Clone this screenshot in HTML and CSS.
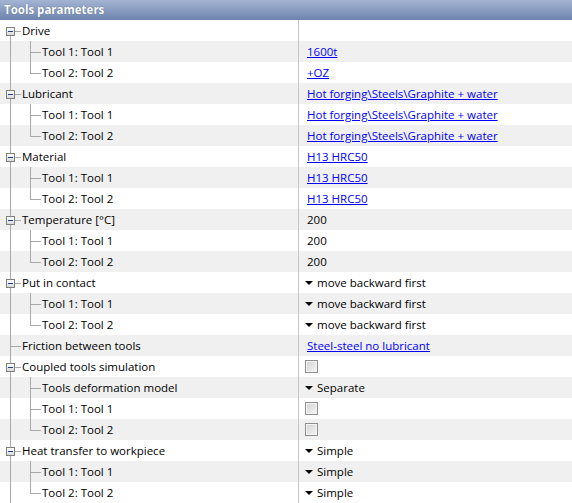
FILE: index.html
```html
<!DOCTYPE html>
<html>
<head>
<meta charset="utf-8">
<link rel="stylesheet" href="styles.css">
</head>
<body>
<div class="panel">
  <div class="header">Tools parameters</div>
  <div class="rows">
    <div class="row"><div class="name"><span class="g g-parent first"><span class="box"></span></span><span class="label">Drive</span></div><div class="value"></div></div>
    <div class="row alt"><div class="name"><span class="g g-child"></span><span class="label">Tool 1: Tool 1</span></div><div class="value"><a class="link">1600t</a></div></div>
    <div class="row"><div class="name"><span class="g g-child last"></span><span class="label">Tool 2: Tool 2</span></div><div class="value"><a class="link">+OZ</a></div></div>

    <div class="row alt"><div class="name"><span class="g g-parent"><span class="box"></span></span><span class="label">Lubricant</span></div><div class="value"><a class="link">Hot forging\Steels\Graphite + water</a></div></div>
    <div class="row"><div class="name"><span class="g g-child"></span><span class="label">Tool 1: Tool 1</span></div><div class="value"><a class="link">Hot forging\Steels\Graphite + water</a></div></div>
    <div class="row alt"><div class="name"><span class="g g-child last"></span><span class="label">Tool 2: Tool 2</span></div><div class="value"><a class="link">Hot forging\Steels\Graphite + water</a></div></div>

    <div class="row"><div class="name"><span class="g g-parent"><span class="box"></span></span><span class="label">Material</span></div><div class="value"><a class="link">H13 HRC50</a></div></div>
    <div class="row alt"><div class="name"><span class="g g-child"></span><span class="label">Tool 1: Tool 1</span></div><div class="value"><a class="link">H13 HRC50</a></div></div>
    <div class="row"><div class="name"><span class="g g-child last"></span><span class="label">Tool 2: Tool 2</span></div><div class="value"><a class="link">H13 HRC50</a></div></div>

    <div class="row alt"><div class="name"><span class="g g-parent"><span class="box"></span></span><span class="label">Temperature [°C]</span></div><div class="value">200</div></div>
    <div class="row"><div class="name"><span class="g g-child"></span><span class="label">Tool 1: Tool 1</span></div><div class="value">200</div></div>
    <div class="row alt"><div class="name"><span class="g g-child last"></span><span class="label">Tool 2: Tool 2</span></div><div class="value">200</div></div>

    <div class="row"><div class="name"><span class="g g-parent"><span class="box"></span></span><span class="label">Put in contact</span></div><div class="value"><span class="drop"></span>move backward first</div></div>
    <div class="row alt"><div class="name"><span class="g g-child"></span><span class="label">Tool 1: Tool 1</span></div><div class="value"><span class="drop"></span>move backward first</div></div>
    <div class="row"><div class="name"><span class="g g-child last"></span><span class="label">Tool 2: Tool 2</span></div><div class="value"><span class="drop"></span>move backward first</div></div>

    <div class="row alt"><div class="name"><span class="g g-leaf"></span><span class="label">Friction between tools</span></div><div class="value"><a class="link">Steel-steel no lubricant</a></div></div>

    <div class="row"><div class="name"><span class="g g-parent"><span class="box"></span></span><span class="label">Coupled tools simulation</span></div><div class="value"><span class="check"></span></div></div>
    <div class="row alt"><div class="name"><span class="g g-child"></span><span class="label">Tools deformation model</span></div><div class="value"><span class="drop"></span>Separate</div></div>
    <div class="row"><div class="name"><span class="g g-child"></span><span class="label">Tool 1: Tool 1</span></div><div class="value"><span class="check"></span></div></div>
    <div class="row alt"><div class="name"><span class="g g-child last"></span><span class="label">Tool 2: Tool 2</span></div><div class="value"><span class="check"></span></div></div>

    <div class="row"><div class="name"><span class="g g-parent"><span class="box"></span></span><span class="label">Heat transfer to workpiece</span></div><div class="value"><span class="drop"></span>Simple</div></div>
    <div class="row alt"><div class="name"><span class="g g-child"></span><span class="label">Tool 1: Tool 1</span></div><div class="value"><span class="drop"></span>Simple</div></div>
    <div class="row"><div class="name"><span class="g g-child last"></span><span class="label">Tool 2: Tool 2</span></div><div class="value"><span class="drop"></span>Simple</div></div>
  </div>
</div>
</body>
</html>
```
FILE: styles.css
```css
html, body {
  margin: 0;
  padding: 0;
  background: #fff;
}
body {
  font-family: "Open Sans", "Noto Sans", sans-serif;
  font-size: 11.5px;
  color: #000;
  width: 572px;
  height: 503px;
  overflow: hidden;
}
.header {
  height: 20px;
  line-height: 20px;
  padding-left: 4px;
  font-size: 11.5px;
  font-weight: bold;
  color: #fff;
  background: linear-gradient(#a4b4d4, #6e84ac);
  text-shadow: 0 0 1px #3f5277;
}
.row {
  display: flex;
  height: 21px;
  background: #fff;
}
.row.alt {
  background: #f0f0f0;
}
.name {
  width: 298px;
  flex: none;
  display: flex;
  align-items: center;
  border-right: 1px solid #c6c6c6;
  box-sizing: content-box;
  white-space: nowrap;
}
.value {
  flex: 1;
  display: flex;
  align-items: center;
  padding-left: 8px;
  white-space: nowrap;
}
.g {
  flex: none;
  align-self: stretch;
  display: flex;
  align-items: flex-start;
  background-repeat: no-repeat;
}
.g-parent {
  width: 22px;
  background-image:
    linear-gradient(#a8a8a8, #a8a8a8),
    linear-gradient(#a8a8a8, #a8a8a8),
    linear-gradient(#a8a8a8, #a8a8a8);
  background-size: 1px 7px, 1px 6px, 6px 1px;
  background-position: 10px 0, 10px 15px, 15px 11px;
}
.g-parent.first {
  background-image:
    linear-gradient(transparent, transparent),
    linear-gradient(#a8a8a8, #a8a8a8),
    linear-gradient(#a8a8a8, #a8a8a8);
}
.box {
  flex: none;
  width: 9px;
  height: 9px;
  box-sizing: border-box;
  margin: 7px 0 0 6px;
  border: 1px solid #808080;
  background:
    linear-gradient(#22408e, #22408e) center / 5px 1px no-repeat,
    linear-gradient(#ffffff, #d8d8d8);
}
.g-child {
  width: 42px;
  background-image:
    linear-gradient(#a8a8a8, #a8a8a8),
    linear-gradient(#a8a8a8, #a8a8a8),
    linear-gradient(#a8a8a8, #a8a8a8);
  background-size: 1px 100%, 1px 100%, 10px 1px;
  background-position: 10px 0, 30px 0, 31px 11px;
}
.g-child.last {
  background-size: 1px 100%, 1px 12px, 10px 1px;
}
.g-leaf {
  width: 22px;
  background-image:
    linear-gradient(#a8a8a8, #a8a8a8),
    linear-gradient(#a8a8a8, #a8a8a8);
  background-size: 1px 100%, 10px 1px;
  background-position: 10px 0, 11px 11px;
}
.link {
  color: #0000ff;
  text-decoration: underline;
  cursor: pointer;
}
.drop {
  display: inline-block;
  flex: none;
  width: 0;
  height: 0;
  border-left: 4px solid transparent;
  border-right: 4px solid transparent;
  border-top: 4px solid #000;
  margin: 0 4px 0 -2px;
}
.check {
  display: block;
  flex: none;
  width: 13px;
  height: 13px;
  box-sizing: border-box;
  margin-left: -2px;
  border: 1px solid #8f8f8f;
  background: linear-gradient(135deg, #d2d2d2, #f6f6f6);
  box-shadow: inset 0 0 0 1px #f4f4f4;
}
```
